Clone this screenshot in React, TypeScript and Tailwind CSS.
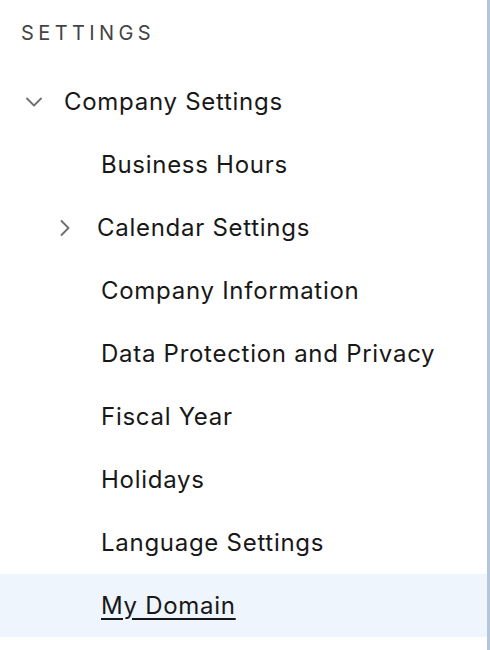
import { ChevronDown, ChevronRight } from 'lucide-react'

const children = [
  { label: 'Business Hours' },
  { label: 'Calendar Settings', expandable: true },
  { label: 'Company Information' },
  { label: 'Data Protection and Privacy' },
  { label: 'Fiscal Year' },
  { label: 'Holidays' },
  { label: 'Language Settings' },
  { label: 'My Domain', active: true },
]

export default function App() {
  return (
    <div
      className="w-[490px] h-[650px] bg-white border-r-[3px] border-[#b4c6dc] overflow-hidden text-[#181818]"
      style={{ fontFamily: 'Inter, "Liberation Sans", sans-serif' }}
    >
      <div className="pt-[20px] pl-[21px] h-[70px] text-[20px] leading-[26px] tracking-[0.22em] text-[#444]">
        SETTINGS
      </div>
      <div className="h-[63px] flex items-center">
        <ChevronDown className="ml-[20px] w-[28px] h-[28px] text-[#707070]" strokeWidth={1.6} />
        <span className="ml-[16px] text-[24px] tracking-[0.03em]">Company Settings</span>
      </div>
      {children.map((item) => (
        <div
          key={item.label}
          className={`h-[63px] flex items-center ${item.active ? 'bg-[#eef5fd]' : ''}`}
        >
          {item.expandable ? (
            <>
              <ChevronRight className="ml-[51px] w-[28px] h-[28px] text-[#707070]" strokeWidth={1.6} />
              <span className="ml-[18px] text-[24px] tracking-[0.03em]">{item.label}</span>
            </>
          ) : (
            <span
              className={`ml-[101px] text-[24px] tracking-[0.03em] ${item.active ? 'underline underline-offset-[4px]' : ''}`}
            >
              {item.label}
            </span>
          )}
        </div>
      ))}
    </div>
  )
}
